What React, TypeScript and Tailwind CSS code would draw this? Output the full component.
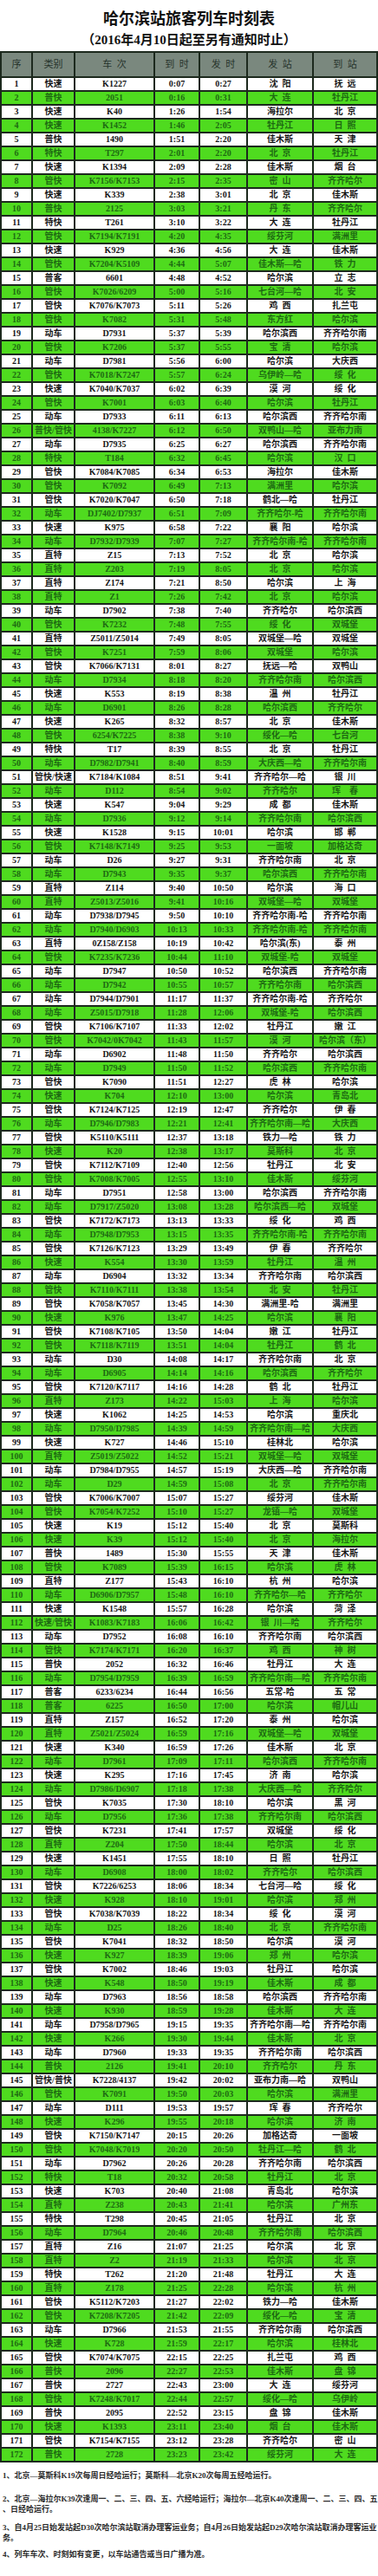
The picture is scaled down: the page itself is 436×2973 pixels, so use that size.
const FONT = "font-['Liberation_Serif','Noto_Sans_CJK_SC',serif]";

const data = `快速|K1227|0:07|0:27|沈 阳|抚 远
普快|2051|0:16|0:31|大 连|牡丹江
快速|K40|1:26|1:54|海拉尔|北 京
快速|K1452|1:46|2:05|牡丹江|日 照
普快|1490|1:51|2:20|佳木斯|天 津
特快|T297|2:01|2:20|北 京|牡丹江
快速|K1394|2:09|2:28|佳木斯|烟 台
管快|K7156/K7153|2:15|2:35|密 山|齐齐哈尔
快速|K339|2:38|3:01|北 京|佳木斯
普快|2125|3:03|3:21|丹 东|齐齐哈尔
特快|T261|3:10|3:22|大 连|牡丹江
管快|K7194/K7191|4:20|4:35|绥芬河|满洲里
快速|K929|4:36|4:56|大 连|佳木斯
管快|K7204/K5109|4:44|5:07|佳木斯—哈|铁 力
普客|6601|4:48|4:52|哈尔滨|立 志
管快|K7026/6209|5:00|5:16|七台河—哈|北 安
管快|K7076/K7073|5:11|5:26|鸡 西|扎兰屯
管快|K7082|5:31|5:48|东方红|哈尔滨
动车|D7931|5:37|5:39|哈尔滨西|齐齐哈尔南
管快|K7206|5:37|5:55|宝 清|哈尔滨
动车|D7981|5:56|6:00|哈尔滨|大庆西
管快|K7018/K7247|5:57|6:24|乌伊岭—哈|绥 化
快速|K7040/K7037|6:02|6:39|漠 河|绥 化
管快|K7001|6:03|6:40|哈尔滨|牡丹江
动车|D7933|6:11|6:13|哈尔滨西|齐齐哈尔南
普快/管快|4138/K7227|6:12|6:50|双鸭山—哈|亚布力南
动车|D7935|6:25|6:27|哈尔滨西|齐齐哈尔南
特快|T184|6:32|6:45|哈尔滨|汉 口
管快|K7084/K7085|6:34|6:53|海拉尔|佳木斯
管快|K7092|6:49|7:13|满洲里|哈尔滨
管快|K7020/K7047|6:50|7:18|鹤北—哈|牡丹江
动车|DJ7402/D7937|6:51|7:09|齐齐哈尔-哈|齐齐哈尔南
快速|K975|6:58|7:22|襄 阳|哈尔滨
动车|D7932/D7939|7:07|7:27|齐齐哈尔南-哈|齐齐哈尔南
直特|Z15|7:13|7:52|北 京|哈尔滨
直特|Z203|7:19|8:05|北 京|哈尔滨
直特|Z174|7:21|8:50|哈尔滨|上 海
直特|Z1|7:26|7:42|北 京|哈尔滨
动车|D7902|7:38|7:40|齐齐哈尔|哈尔滨西
管快|K7232|7:48|7:55|绥 化|双城堡
直特|Z5011/Z5014|7:49|8:05|双城堡—哈|双城堡
管快|K7251|7:59|8:06|双城堡|哈尔滨
管快|K7066/K7131|8:01|8:27|抚远—哈|双鸭山
动车|D7934|8:18|8:20|齐齐哈尔南|哈尔滨西
快速|K553|8:19|8:38|温 州|牡丹江
动车|D6901|8:26|8:28|哈尔滨西|齐齐哈尔
快速|K265|8:32|8:57|北 京|佳木斯
管快|6254/K7225|8:38|9:10|绥化—哈|七台河
特快|T17|8:39|8:55|北 京|牡丹江
动车|D7982/D7941|8:40|8:59|大庆西—哈|齐齐哈尔南
管快/快速|K7184/K1084|8:51|9:41|齐齐哈尔—哈|银 川
动车|D112|8:54|9:02|齐齐哈尔|珲  春
快速|K547|9:04|9:29|成 都|佳木斯
动车|D7936|9:12|9:14|齐齐哈尔南|哈尔滨西
快速|K1528|9:15|10:01|哈尔滨|邯 郸
管快|K7148/K7149|9:25|9:53|一面坡|加格达奇
动车|D26|9:27|9:31|齐齐哈尔南|北 京
动车|D7943|9:35|9:37|哈尔滨西|齐齐哈尔南
直特|Z114|9:40|10:50|哈尔滨|海 口
直特|Z5013/Z5016|9:41|10:16|双城堡—哈|双城堡
动车|D7938/D7945|9:50|10:10|齐齐哈尔南-哈|齐齐哈尔南
动车|D7940/D6903|10:13|10:33|齐齐哈尔南-哈|齐齐哈尔南
直特|0Z158/Z158|10:19|10:42|哈尔滨(东)|泰 州
管快|K7235/K7236|10:44|11:10|双城堡-哈|双城堡
动车|D7947|10:50|10:52|哈尔滨西|齐齐哈尔南
动车|D7942|10:55|10:57|齐齐哈尔南|哈尔滨西
动车|D7944/D7901|11:17|11:37|齐齐哈尔南-哈|齐齐哈尔
动车|Z5015/D7918|11:28|12:06|双城堡-哈|哈尔滨西
管快|K7106/K7107|11:33|12:02|牡丹江|嫩 江
管快|K7042/0K7042|11:43|11:57|漠 河|哈尔滨（东）
动车|D6902|11:48|11:50|齐齐哈尔|哈尔滨西
动车|D7949|11:50|11:52|哈尔滨西|齐齐哈尔南
管快|K7090|11:51|12:27|虎 林|哈尔滨
快速|K704|12:10|13:00|哈尔滨|青岛北
管快|K7124/K7125|12:19|12:47|齐齐哈尔|伊 春
动车|D7946/D7983|12:21|12:41|齐齐哈尔南—哈|大庆西
管快|K5110/K5111|12:37|13:18|铁力—哈|铁 力
快速|K20|12:38|13:17|莫斯科|北 京
管快|K7112/K7109|12:40|12:56|牡丹江|北 安
管快|K7008/K7005|12:55|13:10|佳木斯|绥芬河
动车|D7951|12:58|13:00|哈尔滨西|齐齐哈尔南
动车|D7917/Z5020|13:08|13:28|哈尔滨西—哈|双城堡
管快|K7172/K7173|13:13|13:33|绥 化|鸡 西
动车|D7948/D7953|13:15|13:35|齐齐哈尔南-哈|齐齐哈尔南
管快|K7126/K7123|13:29|13:49|伊 春|齐齐哈尔
快速|K554|13:30|13:59|牡丹江|温 州
动车|D6904|13:32|13:34|齐齐哈尔南|哈尔滨西
管快|K7110/K7111|13:38|13:54|北 安|牡丹江
管快|K7058/K7057|13:45|14:30|满洲里-哈|满洲里
快速|K976|13:47|14:25|哈尔滨|襄 阳
管快|K7108/K7105|13:50|14:04|嫩 江|牡丹江
管快|K7118/K7119|13:51|14:04|牡丹江|鹤 北
动车|D30|14:08|14:17|齐齐哈尔南|北 京
动车|D6905|14:14|14:16|哈尔滨西|齐齐哈尔
管快|K7120/K7117|14:16|14:28|鹤 北|牡丹江
直特|Z173|14:22|15:03|上 海|哈尔滨
快速|K1062|14:25|14:53|哈尔滨|重庆北
动车|D7950/D7985|14:39|14:59|齐齐哈尔南—哈|大庆西
快速|K727|14:46|15:10|桂林北|哈尔滨
直特|Z5019/Z5022|14:52|15:21|双城堡—哈|双城堡
动车|D7984/D7955|14:57|15:19|大庆西—哈|齐齐哈尔南
动车|D29|14:59|15:08|北 京|齐齐哈尔南
管快|K7006/K7007|15:07|15:27|绥芬河|佳木斯
管快|K7054/K7252|15:10|15:27|龙镇—哈|双城堡
快速|K19|15:12|15:40|北 京|莫斯科
快速|K39|15:12|15:40|北 京|海拉尔
普快|1489|15:30|15:55|天 津|佳木斯
管快|K7089|15:39|16:15|哈尔滨|虎 林
直特|Z177|15:43|16:10|杭 州|哈尔滨
动车|D6906/D7957|15:48|16:10|齐齐哈尔—哈|齐齐哈尔
快速|K1548|15:57|16:28|哈尔滨|菏 泽
快速/管快|K1083/K7183|16:06|16:42|银 川—哈|齐齐哈尔
动车|D7952|16:08|16:10|齐齐哈尔南|哈尔滨西
管快|K7174/K7171|16:20|16:37|鸡 西|神 树
普快|2052|16:32|16:46|牡丹江|大 连
动车|D7954/D7959|16:39|16:59|齐齐哈尔南—哈|齐齐哈尔南
普客|6233/6234|16:44|16:56|五常-哈|五 常
普客|6225|16:50|17:00|哈尔滨|帽儿山
直特|Z157|16:52|17:20|泰 州|哈尔滨
直特|Z5021/Z5024|16:59|17:16|双城堡—哈|双城堡
快速|K340|16:59|17:26|佳木斯|北 京
动车|D7961|17:09|17:11|哈尔滨西|齐齐哈尔南
快速|K295|17:16|17:45|济 南|哈尔滨
动车|D7986/D6907|17:18|17:38|大庆西—哈|齐齐哈尔
管快|K7035|17:30|18:10|哈尔滨|黑 河
动车|D7956|17:36|17:38|齐齐哈尔南|哈尔滨西
管快|K7231|17:41|17:57|双城堡|绥 化
直特|Z204|17:50|18:44|哈尔滨|北 京
快速|K1451|17:55|18:10|日 照|牡丹江
动车|D6908|18:00|18:02|齐齐哈尔|哈尔滨西
管快|K7226/6253|18:06|18:34|七台河—哈|绥 化
快速|K928|18:10|19:01|哈尔滨|郑 州
管快|K7038/K7039|18:22|18:34|绥 化|漠 河
动车|D25|18:26|18:40|北 京|齐齐哈尔南
管快|K7041|18:32|18:50|哈尔滨|漠 河
快速|K927|18:39|19:06|郑 州|哈尔滨
管快|K7002|18:46|19:03|牡丹江|哈尔滨
快速|K548|18:50|19:19|佳木斯|成 都
动车|D7963|18:56|18:58|哈尔滨西|齐齐哈尔南
快速|K930|18:59|19:28|佳木斯|大 连
动车|D7958/D7965|19:15|19:35|齐齐哈尔南—哈|齐齐哈尔南
快速|K266|19:30|19:44|佳木斯|北 京
动车|D7960|19:33|19:35|齐齐哈尔南|哈尔滨西
普快|2126|19:41|20:10|齐齐哈尔|丹 东
管快/普快|K7228/4137|19:42|20:02|亚布力南—哈|双鸭山
管快|K7091|19:50|20:03|哈尔滨|满洲里
动车|D111|19:53|19:57|珲 春|齐齐哈尔
快速|K296|19:55|20:18|哈尔滨|济 南
管快|K7150/K7147|20:15|20:26|加格达奇|一面坡
管快|K7048/K7019|20:20|20:50|牡丹江—哈|鹤 北
动车|D7962|20:26|20:28|齐齐哈尔南|哈尔滨西
特快|T18|20:32|20:58|牡丹江|北 京
快速|K703|20:40|21:08|青岛北|哈尔滨
直特|Z238|20:43|21:41|哈尔滨|广州东
特快|T298|20:45|21:05|牡丹江|北 京
动车|D7964|20:46|20:48|齐齐哈尔南|哈尔滨西
直特|Z16|21:07|21:25|哈尔滨|北 京
直特|Z2|21:19|21:33|哈尔滨|北 京
特快|T262|21:20|21:48|牡丹江|大 连
直特|Z178|21:25|22:28|哈尔滨|杭 州
管快|K5112/K7203|21:27|22:02|铁力—哈|佳木斯
管快|K7208/K7205|21:42|22:09|绥化—哈|宝 清
动车|D7966|21:53|21:55|齐齐哈尔南|哈尔滨西
快速|K728|21:59|22:17|哈尔滨|桂林北
管快|K7074/K7075|22:15|22:25|扎兰屯|鸡 西
普快|2096|22:27|22:53|佳木斯|盘 锦
普快|2727|22:43|23:00|大 连|绥芬河
管快|K7248/K7017|22:44|22:57|绥化—哈|乌伊岭
普快|2095|22:52|23:15|盘 锦|佳木斯
快速|K1393|23:11|23:40|烟 台|佳木斯
管快|K7154/K7155|23:12|23:28|齐齐哈尔|密 山
普快|2728|23:23|23:42|绥芬河|大 连`;

const rows = data.split("\n").map((line) => line.split("|"));

const headers = ["序", "类别", "车\u2002次", "到\u2002时", "发\u2002时", "发\u2002站", "到\u2002站"];

const GRID = "grid grid-cols-[36px_49px_92px_52px_55px_76px_74px]";

function spaced(text: string) {
  return text.replace(/ /g, "\u2002");
}

function TimetableRow({ index, cells }: { index: number; cells: string[] }) {
  const green = index % 2 === 0;
  return (
    <div className={`${GRID} h-4 ${green ? "bg-[#4fdb1f] text-[#1d6a12]" : "bg-white text-[#161616]"}`}>
      {[String(index), ...cells].map((value, i) => (
        <div
          key={i}
          className="flex items-center justify-center border-r-2 border-b-2 border-[#1c291d] whitespace-nowrap text-[10px] leading-[14px] font-bold"
        >
          {spaced(value)}
        </div>
      ))}
    </div>
  );
}

export default function App() {
  return (
    <div className={`w-[436px] overflow-hidden bg-white ${FONT}`}>
      <h1 className="pt-[10px] text-center text-[18px] leading-[24px] font-bold text-[#111]">哈尔滨站旅客列车时刻表</h1>
      <p className="mb-[1px] text-center text-[15px] leading-[24px] font-bold text-[#111]">（2016年4月10日起至另有通知时止）</p>

      <div className="border-t-2 border-l-2 border-[#1c291d]">
        <div className={`${GRID} h-[29px] bg-[#7a887e] text-[#26332b]`}>
          {headers.map((h) => (
            <div key={h} className="flex items-center justify-center border-r-2 border-b-2 border-[#1c291d] text-[11px]">
              {h}
            </div>
          ))}
        </div>
        {rows.map((cells, i) => (
          <TimetableRow key={i} index={i + 1} cells={cells} />
        ))}
      </div>

      <div className="px-[3px] pt-[9px] pb-[18px] text-[9px] leading-[12px] font-semibold text-[#2a2a2a] whitespace-nowrap">
        <p>1、北京—莫斯科K19次每周日经哈运行；莫斯科—北京K20次每周五经哈运行。</p>
        <p className="mt-[15px]">
          2、北京—海拉尔K39次逢周一、二、三、四、五、六经哈运行；海拉尔—北京K40次逢周一、二、三、四、五
          <br />
          、日经哈运行。
        </p>
        <p className="mt-[9px]">
          3、自4月25日始发站起D30次哈尔滨站取消办理客运业务；自4月26日始发站起D29次哈尔滨站取消办理客运业
          <br />
          务。
        </p>
        <p className="mt-[7px]">4、列车车次、时刻如有变更，以车站通告或当日广播为准。</p>
      </div>
    </div>
  );
}
